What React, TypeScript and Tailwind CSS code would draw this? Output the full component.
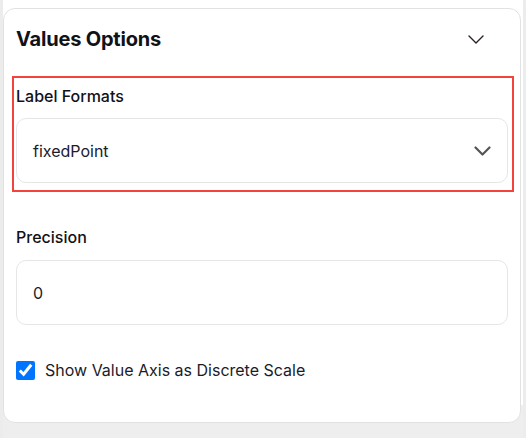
import { useState } from "react";

const FONT = { fontFamily: "Inter, 'Noto Sans', sans-serif" };

const ChevronThin = () => (
  <svg width="16" height="9" viewBox="0 0 16 9" fill="none" className="shrink-0">
    <path d="M1 1l7 7 7-7" stroke="#2a1f24" strokeWidth="1.4" strokeLinecap="round" strokeLinejoin="round" />
  </svg>
);

const ChevronBold = () => (
  <svg width="17" height="10" viewBox="0 0 17 10" fill="none" className="shrink-0">
    <path d="M1.5 1.5l7 7 7-7" stroke="#555" strokeWidth="2.2" strokeLinecap="round" strokeLinejoin="round" />
  </svg>
);

export default function App() {
  const [format] = useState("fixedPoint");
  const [precision, setPrecision] = useState("0");
  const [discrete, setDiscrete] = useState(true);

  return (
    <div className="w-[526px] h-[438px] flex overflow-hidden text-[#111118]" style={FONT}>
      <div className="w-[3px] bg-[#ececec]" />
      <div className="w-[520px] pt-[8px] bg-[linear-gradient(to_bottom,#ffffff_405px,#eeeeee_405px)]">
        {/* Card */}
        <div className="w-[518px] h-[415px] bg-white border border-[#e2e2e2] rounded-[12px] pl-[12px] pr-[12px]">
          {/* Header */}
          <div className="flex items-center justify-between pt-[16px] h-[44px]">
            <h2 className="text-[20px] leading-[28px] font-bold tracking-[-0.2px]">Values Options</h2>
            <div className="mr-[24px] mt-[1px]">
              <ChevronThin />
            </div>
          </div>

          {/* Label Formats (highlighted) */}
          <div className="mt-[23px] -ml-[4px] -mr-[6px] border-2 border-[#f2443a] pl-[2px] pr-[4px] pt-[6px] pb-[7px]">
            <p className="text-[16px] leading-[24px] font-medium">Label Formats</p>
            <div className="mt-[10px] h-[65px] border border-[#e6e6e6] rounded-[10px] flex items-center justify-between pl-[16px] pr-[16px]">
              <span className="text-[16px] text-[#1b1b2a]">{format}</span>
              <ChevronBold />
            </div>
          </div>

          {/* Precision */}
          <div className="mt-[33px]">
            <p className="text-[16px] leading-[24px] font-medium">Precision</p>
            <input
              value={precision}
              onChange={(e) => setPrecision(e.target.value)}
              className="mt-[11px] w-full h-[65px] border border-[#e6e6e6] rounded-[10px] px-[16px] text-[16px] text-[#1b1b2a] outline-none"
            />
          </div>

          {/* Checkbox */}
          <label className="mt-[33px] flex items-center gap-[10px] h-[24px] cursor-pointer">
            <input
              type="checkbox"
              checked={discrete}
              onChange={() => setDiscrete(!discrete)}
              className="w-[19px] h-[19px] m-0 accent-[#0075ff]"
            />
            <span className="text-[16px] leading-[24px] text-[#1b1b2a]">Show Value Axis as Discrete Scale</span>
          </label>
        </div>
      </div>
      <div className="w-[3px] bg-[#ececec]" />
    </div>
  );
}
